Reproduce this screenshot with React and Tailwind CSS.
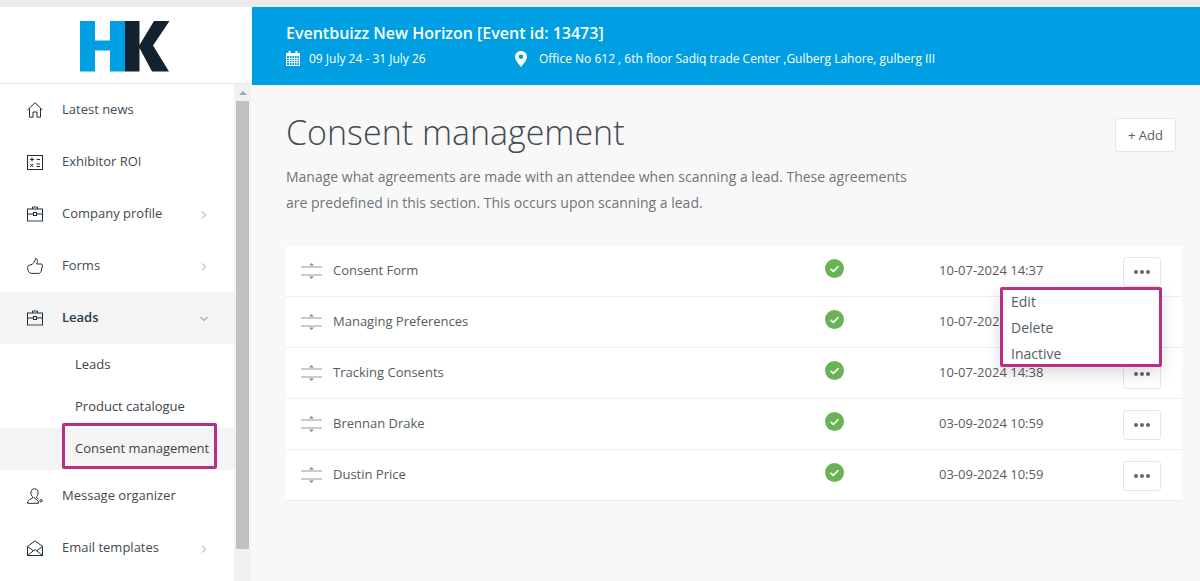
import React from "react";

const Ico = ({ children, className = "" }) => (
  <svg width="16" height="16" viewBox="0 0 16 16" fill="none" stroke="currentColor" strokeWidth="1" className={"text-[#1f2d3a] " + className}>
    {children}
  </svg>
);

const HomeIcon = () => (
  <Ico>
    <path d="M0.5 8 L8 0.8 L15.5 8" />
    <path d="M2.5 6.5 V15.2 H6 V10 H10 V15.2 H13.5 V6.5" />
  </Ico>
);
const CalcIcon = () => (
  <Ico>
    <rect x="0.5" y="1.5" width="15" height="14" />
    <path d="M3 5.5 H7 M5 3.5 V7.5 M9.5 5.5 H13 M3.2 9.8 L6.4 13 M6.4 9.8 L3.2 13 M9.5 10 H13 M9.5 12.5 H13" />
  </Ico>
);
const CaseIcon = () => (
  <Ico>
    <path d="M5.5 3 V1 H10.5 V3" />
    <rect x="0.5" y="3" width="15" height="12" />
    <path d="M0.5 8 H6.5 M9.5 8 H15.5" />
    <rect x="6.5" y="6.5" width="3" height="3" />
    <path d="M1 15 H15" stroke="#9aa3ab" strokeWidth="2" />
  </Ico>
);
const ThumbIcon = () => (
  <Ico>
    <path d="M0.6 9.5 C0.6 7.5 2.5 7 4 6.8 C6 6 8 4 8.5 0.6 C10 0.4 10.8 2 10.4 3.5 L9.7 6 H14 C15.5 6 15.8 7.5 15.2 9 L14 13.5 C13.6 14.8 12.6 15.4 11.5 15.4 H4.5 C2 15.4 0.6 12.5 0.6 9.5 Z" />
  </Ico>
);
const UserIcon = () => (
  <Ico>
    <path d="M7.5 0.8 C4.8 0.8 3.8 3 3.9 5 C4 7 4.8 8.2 5.8 9 C6 10 5.4 10.6 3.9 11 C2 11.6 0.7 12.5 0.5 15.3 H11.5 C11.3 12.5 10 11.6 8.5 11 C7.5 10.6 7 10 7.2 9" />
    <path d="M7.5 0.8 C10.2 0.8 11.2 3 11.1 5 C11 7 10.2 8.2 9.3 9 C9.5 10 10.4 10.5 11.5 10.8" />
    <circle cx="14" cy="12.8" r="1.2" />
  </Ico>
);
const MailIcon = () => (
  <Ico>
    <path d="M0.5 6.5 L8 0.8 L15.5 6.5 V15.5 H0.5 Z" />
    <path d="M0.5 6.5 L6 10.5 M15.5 6.5 L10 10.5 M0.5 15.5 L8 9.5 L15.5 15.5" />
  </Ico>
);

const ChevRight = () => (
  <svg width="6" height="8" viewBox="0 0 6 8" fill="none" stroke="#9a9a9a" strokeWidth="1"><path d="M1 0.5 L4.5 4 L1 7.5" /></svg>
);
const ChevDown = () => (
  <svg width="8" height="6" viewBox="0 0 8 6" fill="none" stroke="#777" strokeWidth="1"><path d="M0.5 1 L4 4.5 L7.5 1" /></svg>
);

const Logo = () => (
  <svg width="90" height="51" viewBox="0 0 90 51">
    <path d="M0 0 H15 V19.5 H30 V0 H45 V50.5 H30 V29.5 H15 V50.5 H0 Z" fill="#009fe3" />
    <path d="M45 0 H59.5 V50.5 H45 Z M59.5 24 L74 0 H89.5 L73 24.5 L89 50.5 H72 L59.5 27 Z" fill="#14212e" />
  </svg>
);

const MenuItem = ({ icon, label, chev, active }) => (
  <div className={"flex items-center h-[52px] pl-[27px] pr-[26px] " + (active ? "bg-[#f4f4f4] font-semibold text-[#2b3a4a]" : "text-[#434a52]")}>
    <span className="w-[35px] flex shrink-0">{icon}</span>
    <span className="flex-1">{label}</span>
    {chev === "right" && <span className="mr-[1px] mt-[2px]"><ChevRight /></span>}
    {chev === "down" && <span className="mt-[2px]"><ChevDown /></span>}
  </div>
);

const SubItem = ({ label, active }) => (
  <div className={"relative h-[42px] flex items-center pl-[75px] text-[#3c434a] " + (active ? "bg-[#f4f4f4]" : "")}>
    {label}
    {active && <div className="absolute left-[62px] top-[-5px] w-[155px] h-[46px] border-[3px] border-[#b92f84] rounded-[2px]"></div>}
  </div>
);

const rows = [
  { name: "Consent Form", date: "10-07-2024 14:37", menu: true },
  { name: "Managing Preferences", date: "10-07-2024 14:38" },
  { name: "Tracking Consents", date: "10-07-2024 14:38" },
  { name: "Brennan Drake", date: "03-09-2024 10:59" },
  { name: "Dustin Price", date: "03-09-2024 10:59" },
];

const Grip = () => (
  <svg width="21" height="18" viewBox="0 0 21 18" className="shrink-0">
    <path d="M8 3.5 L10.5 1 L13 3.5 Z M8 14.5 L10.5 17 L13 14.5 Z" fill="#888" />
    <path d="M0 5 H21 M0 13 H21" stroke="#999" strokeWidth="1" />
  </svg>
);

const Check = () => (
  <svg width="19" height="19" viewBox="0 0 19 19">
    <circle cx="9.5" cy="9.5" r="9.5" fill="#69b356" />
    <path d="M5.5 9.8 L8.3 12.4 L13.5 7.2" fill="none" stroke="#fff" strokeWidth="1.6" />
  </svg>
);

const Row = ({ r }) => (
  <div className="grid grid-cols-[524px_114px_184px_38px] h-[51px] pl-[15px] items-center border-b border-[#eeeeee] text-[13px] text-[#555c63]">
    <div className="flex items-center gap-[11px]">
      <Grip />
      <span className="-mt-[1px]">{r.name}</span>
    </div>
    <div className="-mt-[5px] flex"><Check /></div>
    <div className="-mt-[1px]">{r.date}</div>
    <div className="relative mt-[1px]">
      <button className="flex items-center justify-center gap-[2px] w-[38px] h-[30px] bg-white border border-[#e6e6e6] rounded-[3px]">
        <span className="w-[4px] h-[4px] rounded-full bg-[#666]"></span>
        <span className="w-[4px] h-[4px] rounded-full bg-[#666]"></span>
        <span className="w-[4px] h-[4px] rounded-full bg-[#666]"></span>
      </button>
      {r.menu && (
        <div className="absolute z-10 right-[-1px] top-[30px] w-[162px] h-[80px] bg-white border-[3px] border-[#b92f84] rounded-[2px] pl-[8px] text-[14px] leading-[26px] text-[#555c63] shadow-[0_6px_16px_rgba(0,0,0,0.15)]">
          <div className="-mt-[1px]">Edit</div>
          <div>Delete</div>
          <div>Inactive</div>
        </div>
      )}
    </div>
  </div>
);

export default function App() {
  return (
    <div className="h-[581px] overflow-hidden bg-[#f8f8f8] font-['Open_Sans',sans-serif] flex flex-col">
      <div className="h-[7px] bg-[#ebebeb] shrink-0"></div>
      <div className="flex flex-1 min-h-0">
        <aside className="w-[252px] shrink-0 flex flex-col">
          <div className="h-[77px] bg-white border-b border-[#ebebeb] flex items-center justify-center pr-[2px] pt-[3px] shrink-0">
            <Logo />
          </div>
          <div className="flex flex-1 min-h-0">
            <nav className="w-[234px] bg-white text-[13px] shrink-0">
              <MenuItem icon={<HomeIcon />} label="Latest news" />
              <MenuItem icon={<CalcIcon />} label="Exhibitor ROI" />
              <MenuItem icon={<CaseIcon />} label="Company profile" chev="right" />
              <MenuItem icon={<ThumbIcon />} label="Forms" chev="right" />
              <MenuItem icon={<CaseIcon />} label="Leads" chev="down" active />
              <SubItem label="Leads" />
              <SubItem label="Product catalogue" />
              <SubItem label="Consent management" active />
              <MenuItem icon={<UserIcon />} label="Message organizer" />
              <MenuItem icon={<MailIcon />} label="Email templates" chev="right" />
            </nav>
            <div className="w-[17px] bg-[#f1f1f1] shrink-0 flex flex-col items-center">
              <div className="h-[17px] flex items-center justify-center">
                <div className="w-0 h-0 border-x-[4px] border-x-transparent border-b-[4px] border-b-[#a3a3a3]"></div>
              </div>
              <div className="w-[13px] h-[448px] bg-[#c1c1c1]"></div>
            </div>
          </div>
        </aside>
        <main className="flex-1 min-w-0">
          <header className="h-[78px] bg-[#009fe3] text-white pl-[34px] pt-[14px]">
            <div className="text-[16px] leading-[24px] font-semibold">Eventbuizz New Horizon [Event id: 13473]</div>
            <div className="flex items-center text-[12px] leading-[18px] mt-[5px]">
              <div className="flex items-center w-[229px]">
                <svg width="14" height="15" viewBox="0 0 14 15" className="mr-[9px] -mt-[1px]" fill="#fff">
                  <path fillRule="evenodd" d="M0 2 H2.5 V0 H4.5 V2 H9.5 V0 H11.5 V2 H14 V15 H0 Z M1 5 V14 H13 V5 Z" />
                  <path d="M3.5 5 V14 M6 5 V14 M8.5 5 V14 M11 5 V14 M1 7.5 H13 M1 9.5 H13 M1 11.5 H13" stroke="#fff" strokeWidth="0.8" />
                </svg>
                <span>09 July 24 - 31 July 26</span>
              </div>
              <svg width="12" height="16" viewBox="0 0 12 16" className="mr-[12px] -mt-[1px]">
                <path fillRule="evenodd" d="M6 0 C9.3 0 12 2.5 12 5.7 C12 9 8 13.5 6 16 C4 13.5 0 9 0 5.7 C0 2.5 2.7 0 6 0 Z M6 3.5 A2.3 2.3 0 1 0 6 8.1 A2.3 2.3 0 1 0 6 3.5 Z" fill="#fff" />
              </svg>
              <span>Office No 612 , 6th floor Sadiq trade Center ,Gulberg Lahore, gulberg III</span>
            </div>
          </header>
          <div className="pl-[34px] pr-[18px]">
            <div className="flex justify-between items-start">
              <div>
                <h1 className="text-[34px] leading-[46px] font-light text-[#444b52] mt-[24px]">Consent management</h1>
                <p className="text-[14px] leading-[26px] text-[#6f757b] w-[640px] mt-[9px]">
                  Manage what agreements are made with an attendee when scanning a lead. These agreements are predefined in this section. This occurs upon scanning a lead.
                </p>
              </div>
              <button className="mt-[33px] mr-[6px] w-[61px] h-[34px] pt-[1px] bg-white border border-[#e6e6e6] rounded-[3px] text-[13px] text-[#555c63]">+ Add</button>
            </div>
            <div className="mt-[30px] bg-white">
              {rows.map((r, i) => <Row key={i} r={r} />)}
            </div>
          </div>
        </main>
      </div>
    </div>
  );
}
